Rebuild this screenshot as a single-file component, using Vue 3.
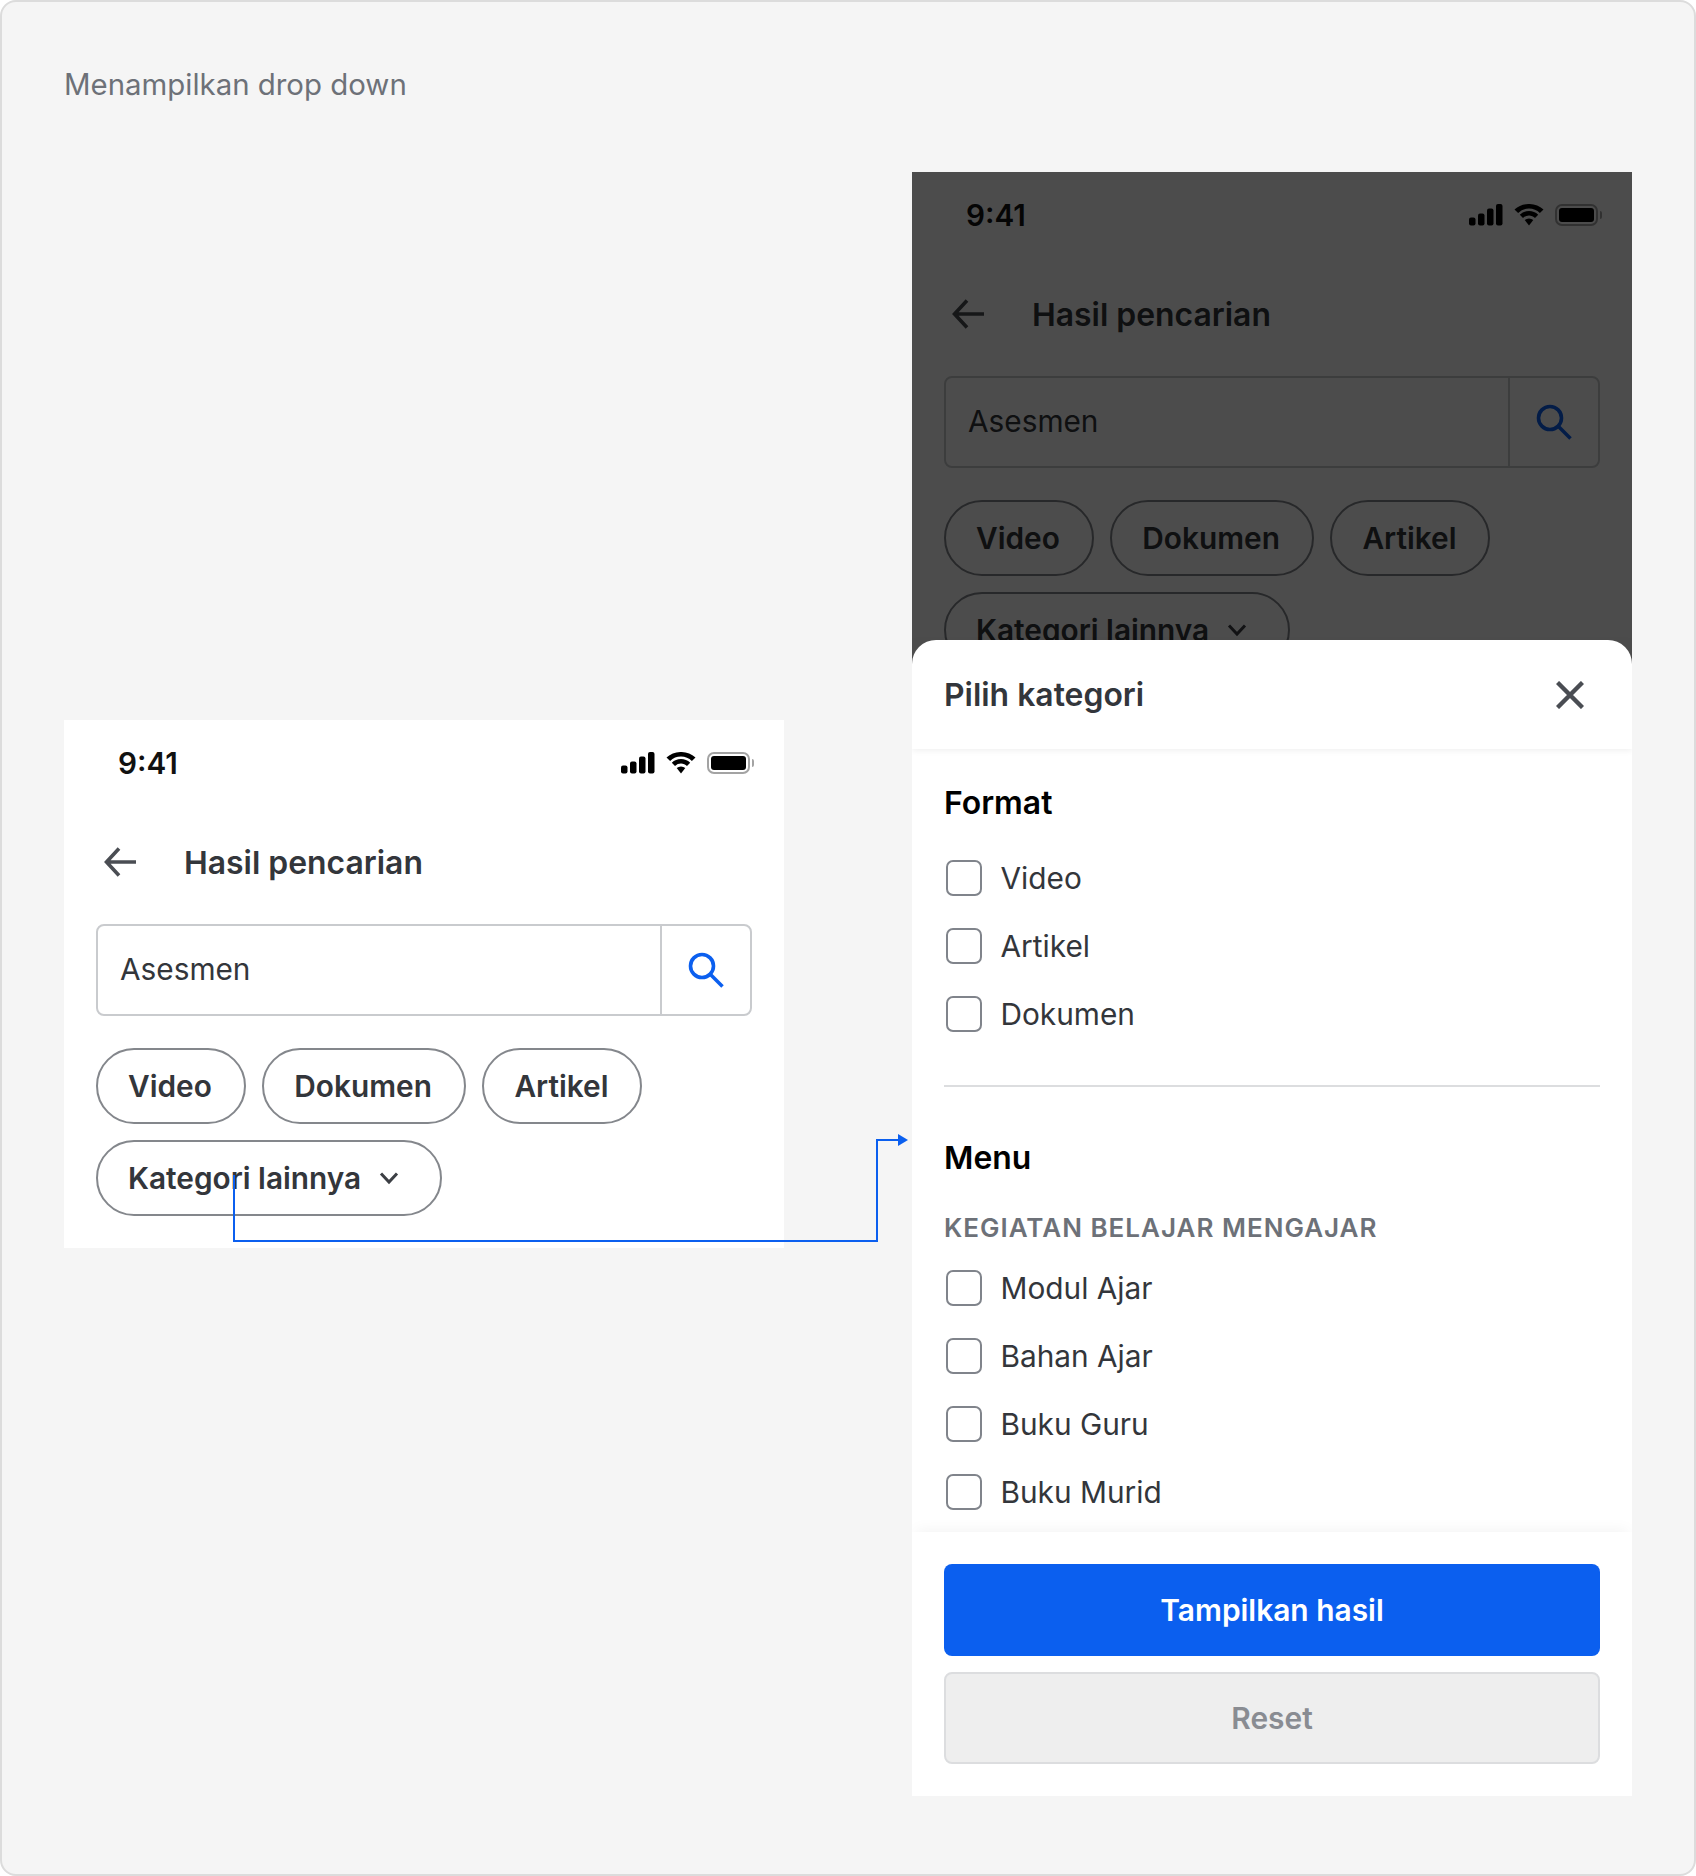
<script setup>
const chips = ['Video', 'Dokumen', 'Artikel']
const formats = ['Video', 'Artikel', 'Dokumen']
const menus = ['Modul Ajar', 'Bahan Ajar', 'Buku Guru', 'Buku Murid']
</script>

<template>
  <div class="frame">
    <p class="caption">Menampilkan drop down</p>
    <div class="stage">
      <section class="phone phone--short">
        <div class="status">
          <span class="time">9:41</span>
          <div class="status-icons">
            <svg width="34" height="22" viewBox="0 0 34 22"><rect x="0" y="13.5" width="6.5" height="8" rx="2"/><rect x="9" y="9.5" width="6.5" height="12" rx="2"/><rect x="18" y="4.5" width="6.5" height="17" rx="2"/><rect x="27" y="0" width="6.5" height="21.5" rx="2"/></svg>
            <svg width="30" height="22" viewBox="0 0 30 22"><path d="M15 4.6c4.2 0 8 1.6 10.9 4.3L29.500 5.500A21 21 0 0 0 15 0 21 21 0 0 0 .5 5.500l3.600 3.400A15.800 15.800 0 0 1 15 4.600Z"/><path d="M15 11.500c2.300 0 4.400.9 6 2.400l3.200-3.200A13.400 13.400 0 0 0 15 7a13.400 13.400 0 0 0-9.200 3.700L9 13.900a8.700 8.700 0 0 1 6-2.400Z"/><path d="M15 21.500l4.300-5.400a6.300 6.300 0 0 0-8.600 0L15 21.500Z"/></svg>
            <span class="battery"><i></i></span>
          </div>
        </div>
        <header class="nav">
          <svg class="back" width="32" height="30" viewBox="0 0 32 30" fill="none" stroke="#4a4d53" stroke-width="3.600"><path d="M32 15H3M15 1.500 2.500 15 15 28.500"/></svg>
          <h1>Hasil pencarian</h1>
        </header>
        <div class="search">
          <span class="query">Asesmen</span>
          <span class="search-btn">
            <svg width="36" height="36" viewBox="0 0 36 36" fill="none" stroke="#0b5fef" stroke-width="3.600"><circle cx="14" cy="14" r="11.500"/><path d="M22.500 22.500 34.500 34.500"/></svg>
          </span>
        </div>
        <div class="chips">
          <span v-for="c in chips" :key="c" class="chip">{{ c }}</span>
          <span class="chip">Kategori lainnya<svg class="chev" width="20" height="14" viewBox="0 0 20 14" fill="none" stroke="#3c3f44" stroke-width="3"><path d="M2 2.500l8 8.500 8-8.500"/></svg></span>
        </div>
      </section>

      <section class="phone phone--tall">
        <div class="status">
          <span class="time">9:41</span>
          <div class="status-icons">
            <svg width="34" height="22" viewBox="0 0 34 22"><rect x="0" y="13.5" width="6.5" height="8" rx="2"/><rect x="9" y="9.5" width="6.5" height="12" rx="2"/><rect x="18" y="4.5" width="6.5" height="17" rx="2"/><rect x="27" y="0" width="6.5" height="21.5" rx="2"/></svg>
            <svg width="30" height="22" viewBox="0 0 30 22"><path d="M15 4.6c4.2 0 8 1.6 10.9 4.3L29.500 5.500A21 21 0 0 0 15 0 21 21 0 0 0 .5 5.500l3.600 3.400A15.800 15.800 0 0 1 15 4.600Z"/><path d="M15 11.500c2.300 0 4.400.9 6 2.400l3.200-3.200A13.400 13.400 0 0 0 15 7a13.400 13.400 0 0 0-9.200 3.700L9 13.900a8.700 8.700 0 0 1 6-2.400Z"/><path d="M15 21.500l4.300-5.400a6.300 6.300 0 0 0-8.600 0L15 21.500Z"/></svg>
            <span class="battery"><i></i></span>
          </div>
        </div>
        <header class="nav">
          <svg class="back" width="32" height="30" viewBox="0 0 32 30" fill="none" stroke="#4a4d53" stroke-width="3.600"><path d="M32 15H3M15 1.500 2.500 15 15 28.500"/></svg>
          <h1>Hasil pencarian</h1>
        </header>
        <div class="search">
          <span class="query">Asesmen</span>
          <span class="search-btn">
            <svg width="36" height="36" viewBox="0 0 36 36" fill="none" stroke="#0b5fef" stroke-width="3.600"><circle cx="14" cy="14" r="11.500"/><path d="M22.500 22.500 34.500 34.500"/></svg>
          </span>
        </div>
        <div class="chips">
          <span v-for="c in chips" :key="c" class="chip">{{ c }}</span>
          <span class="chip">Kategori lainnya<svg class="chev" width="20" height="14" viewBox="0 0 20 14" fill="none" stroke="#3c3f44" stroke-width="3"><path d="M2 2.500l8 8.500 8-8.500"/></svg></span>
        </div>

        <div class="scrim"></div>

        <div class="sheet">
          <div class="sheet-head">
            <h2>Pilih kategori</h2>
            <svg width="28" height="28" viewBox="0 0 28 28" fill="none" stroke="#4a4d53" stroke-width="4.400"><path d="M1.500 1.500l25 25M26.500 1.500l-25 25"/></svg>
          </div>
          <div class="sheet-body">
            <div class="group group--format">
              <h3>Format</h3>
              <ul class="checks">
                <li v-for="f in formats" :key="f"><span class="box"></span>{{ f }}</li>
              </ul>
            </div>
            <div class="group group--menu">
              <h3>Menu</h3>
              <h4>KEGIATAN BELAJAR MENGAJAR</h4>
              <ul class="checks">
                <li v-for="m in menus" :key="m"><span class="box"></span>{{ m }}</li>
              </ul>
            </div>
          </div>
          <div class="sheet-foot">
            <button class="btn btn--primary">Tampilkan hasil</button>
            <button class="btn btn--ghost">Reset</button>
          </div>
        </div>
      </section>

      <svg class="connector" width="680" height="120" viewBox="0 0 680 120" fill="none">
        <path d="M2 45V111H645V10H668" stroke="#0b5fef" stroke-width="2"/>
        <path d="M666 4l10 6-10 6Z" fill="#0b5fef"/>
      </svg>
    </div>
  </div>
</template>

<style>
html, body { margin: 0; background: #fff; }
</style>

<style scoped>
.frame {
  box-sizing: border-box;
  width: 1696px;
  height: 1876px;
  background: #f5f5f5;
  border: 2px solid #dcdcdc;
  border-radius: 16px;
  padding: 60px 62px 0;
  font-family: Inter, "Noto Sans", sans-serif;
  color: #33363b;
}
.caption {
  margin: 0;
  height: 48px;
  font-size: 29.4px;
  line-height: 46px;
  color: #6d7178;
}
.stage {
  position: relative;
  margin-top: 62px;
  height: 1624px;
  display: flex;
  align-items: center;
  gap: 128px;
}
.phone {
  position: relative;
  box-sizing: border-box;
  width: 720px;
  flex: none;
  background: #fff;
  padding: 0 32px;
}
.phone--short { height: 528px; }
.phone--tall { height: 1624px; overflow: hidden; }
.status {
  height: 86px;
  margin-right: -2px;
  display: flex;
  align-items: center;
  justify-content: space-between;
}
.time {
  margin-left: 22px;
  font-size: 29.7px;
  font-weight: 600;
  color: #111;
}
.status-icons { display: flex; align-items: center; gap: 11px; }
.battery {
  position: relative;
  box-sizing: border-box;
  width: 43px;
  height: 22px;
  margin-right: 4px;
  border: 2px solid #a3a3a3;
  border-radius: 7px;
  padding: 2px;
  display: flex;
}
.battery i { flex: 1; background: #000; border-radius: 3px; }
.battery::after {
  content: "";
  position: absolute;
  right: -6px;
  top: 5px;
  width: 2px;
  height: 8px;
  background: #a3a3a3;
  border-radius: 0 2px 2px 0;
}
.nav {
  display: flex;
  align-items: center;
  height: 56px;
  margin: 28px 0 34px 8px;
}
.back { flex: none; }
h1 {
  margin: 0 0 0 48px;
  font-size: 31.9px;
  font-weight: 600;
}
.search {
  box-sizing: border-box;
  height: 92px;
  border: 2px solid #c9cbce;
  border-radius: 8px;
  display: flex;
  align-items: center;
}
.query {
  flex: 1;
  padding-left: 22px;
  font-size: 29.8px;
  margin-top: -2px;
}
.search-btn {
  box-sizing: border-box;
  width: 90px;
  height: 100%;
  border-left: 2px solid #c9cbce;
  display: flex;
  align-items: center;
  justify-content: center;
}
.chips {
  display: flex;
  flex-wrap: wrap;
  gap: 16px 16.5px;
  margin-top: 32px;
}
.chip {
  box-sizing: border-box;
  height: 76px;
  padding: 0 32px 0 30px;
  border: 2px solid #84878c;
  border-radius: 38px;
  display: inline-flex;
  align-items: center;
  font-size: 29.8px;
  font-weight: 600;
  white-space: pre;
}
.chev { margin: 0 9px 0 18px; }
.scrim {
  position: absolute;
  inset: 0;
  background: rgba(0, 0, 0, 0.7);
}
.sheet {
  position: absolute;
  left: 0;
  right: 0;
  top: 468px;
  bottom: 0;
  background: #fff;
  border-radius: 24px 24px 0 0;
  display: flex;
  flex-direction: column;
}
.sheet-head {
  flex: none;
  box-sizing: border-box;
  height: 109px;
  padding: 0 48px 0 32px;
  display: flex;
  align-items: center;
  justify-content: space-between;
  box-shadow: 0 2px 6px rgba(0, 0, 0, 0.06);
  position: relative;
}
h2 { margin: 0; font-size: 31.9px; font-weight: 600; }
.sheet-body {
  flex: 1;
  min-height: 0;
  overflow: hidden;
  padding: 0 32px;
}
.group--format {
  padding: 31px 0 37px;
  border-bottom: 2px solid #dcdddf;
}
h3 { margin: 0; height: 46px; line-height: 46px; font-size: 31.9px; font-weight: 600; color: #000; }
h4 { margin: 30px 0 0; height: 34px; line-height: 34px; font-size: 26px; font-weight: 600; letter-spacing: 1px; color: #6d7178; }
.group--menu { padding-top: 48px; }
.checks { list-style: none; margin: 0; padding: 0; }
.group--format .checks { margin-top: 17.5px; }
.group--menu .checks { margin-top: 9px; }
.checks li {
  height: 68px;
  display: flex;
  align-items: center;
  font-size: 29.8px;
  color: #33363b;
}
.box {
  box-sizing: border-box;
  flex: none;
  width: 36px;
  height: 36px;
  margin: 0 18.5px 0 2px;
  border: 2px solid #80848b;
  border-radius: 7px;
}
.sheet-foot {
  flex: none;
  padding: 32px;
  display: flex;
  flex-direction: column;
  gap: 16px;
  background: #fff;
  position: relative;
  box-shadow: 0 -6px 14px -4px rgba(0, 0, 0, 0.05);
}
.btn {
  box-sizing: border-box;
  height: 92px;
  border-radius: 8px;
  font-family: inherit;
  font-size: 29.9px;
  font-weight: 600;
}
.btn--primary { background: #0b5fef; border: 0; color: #fff; }
.btn--ghost { background: #eeeeee; border: 2px solid #dcdddf; color: #898c92; }
.connector {
  position: absolute;
  left: 168px;
  top: 958px;
  overflow: visible;
}
</style>
